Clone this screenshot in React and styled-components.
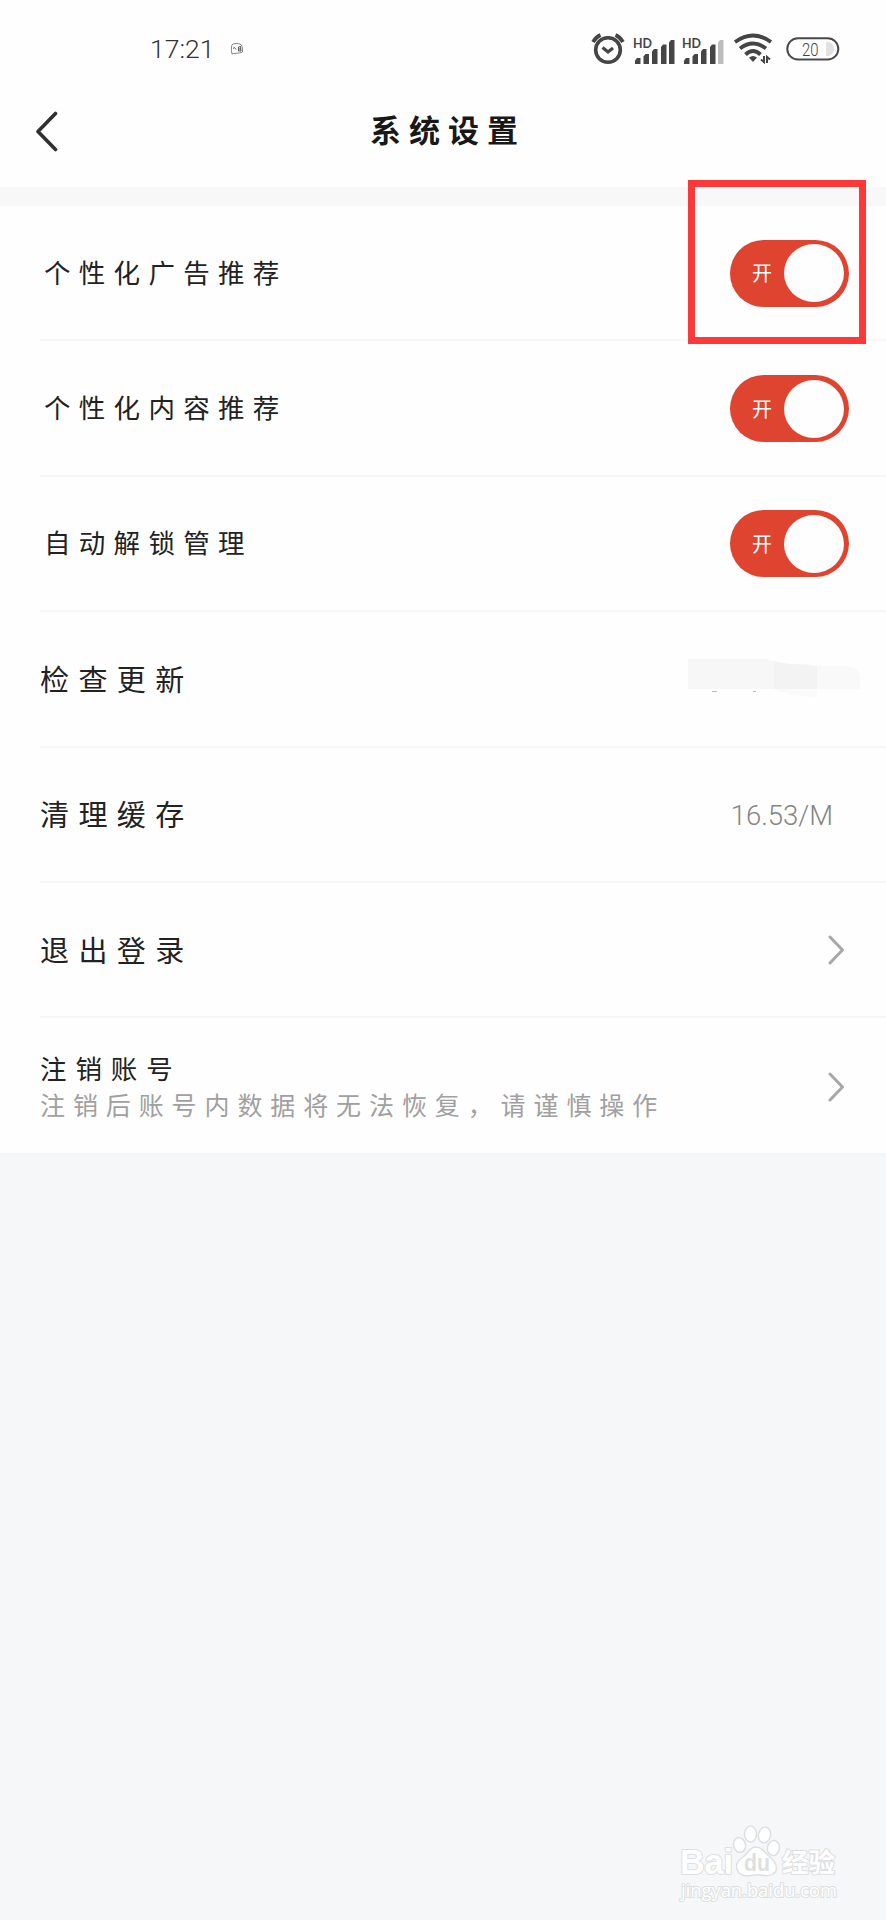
import React from 'react';
import styled, { createGlobalStyle } from 'styled-components';

const GlobalStyle = createGlobalStyle`
  * { box-sizing: border-box; }
  body {
    margin: 0;
    background: #f6f7f9;
    font-family: Roboto, "Noto Sans CJK SC", sans-serif;
    color: #222;
  }
  svg { display: block; }
`;

const Screen = styled.main`
  position: relative;
  width: 886px;
  height: 1920px;
  overflow: hidden;
  background: #f6f7f9;
`;

const StatusBar = styled.div`
  display: flex;
  align-items: center;
  height: 98px;
  padding: 0 46px 0 150px;
  background: #fefefe;
`;

const Clock = styled.span`
  width: 80px;
  font-size: 26.5px;
  font-weight: 300;
  line-height: 30px;
  white-space: nowrap;
  color: #333;
`;

const StatusIcons = styled.div`
  display: flex;
  align-items: center;
  gap: 8px;
  margin-left: auto;
`;

const Header = styled.header`
  display: grid;
  grid-template-columns: 80px 1fr 80px;
  align-items: center;
  height: 89px;
  padding: 0 0 22px;
  background: #fefefe;
`;

const BackButton = styled.button`
  display: block;
  padding: 0 0 0 35px;
  border: 0;
  background: none;
`;

const Title = styled.h1`
  margin: 0;
  padding-left: 10px;
  font-size: 31px;
  line-height: 44px;
  font-weight: 700;
  letter-spacing: 8px;
  text-align: center;
  color: #181818;
`;

const Band = styled.div`
  height: 19px;
  background: #f8f8f8;
`;

const List = styled.section`
  background: #fefefe;
  height: 947px;
`;

const Row = styled.div`
  display: flex;
  align-items: center;
  justify-content: space-between;
  height: 135.4px;
  margin-left: 40px;
  padding-top: 1px;
  padding-right: ${(p) => p.$right || 41}px;
  border-bottom: ${(p) => (p.$last ? '0' : '2px solid #f7f7f7')};
`;

const Label = styled.span`
  display: block;
  padding-top: ${(p) => (p.$compact ? 1 : 3)}px;
  padding-left: ${(p) => (p.$compact ? 4 : 0)}px;
  font-size: ${(p) => (p.$compact ? 26.5 : 29)}px;
  letter-spacing: ${(p) => (p.$compact ? 8.3 : 9.4)}px;
  line-height: 36px;
  font-weight: 400;
  white-space: nowrap;
`;

const Account = styled.div`
  display: flex;
  flex-direction: column;
`;

const AccountName = styled(Label)`
  padding-left: 0;
  font-size: 26.5px;
  letter-spacing: 8.9px;
`;

const Hint = styled.span`
  font-size: 25px;
  letter-spacing: 7.9px;
  line-height: 37px;
  font-weight: 400;
  white-space: nowrap;
  color: #a0a0a0;
`;

const Value = styled.span`
  padding-top: 2px;
  font-size: 27.5px;
  font-weight: 300;
  line-height: 36px;
  color: #858585;
`;

const Switch = styled.button`
  display: flex;
  align-items: center;
  justify-content: space-between;
  width: 119px;
  height: 67px;
  margin-right: -4px;
  padding: 0 5px 0 22px;
  border: 0;
  border-radius: 34px;
  background: #de442f;
  color: #fff;
  font: 400 20px/24px "Noto Sans CJK SC", sans-serif;
`;

const Knob = styled.i`
  width: 60px;
  height: 58px;
  border-radius: 50%;
  background: #fefefe;
`;

const Highlight = styled.div`
  position: absolute;
  left: 688px;
  top: 180px;
  width: 178px;
  height: 164px;
  border: 7px solid #fd3838;
`;

const Watermark = styled.svg`
  position: absolute;
  left: 671px;
  top: 1820px;
`;

function Toggle() {
  return <Switch role="switch" aria-checked="true">开<Knob /></Switch>;
}

function Chevron() {
  return (
    <svg width="17" height="30" viewBox="0 0 17 30" fill="none">
      <path d="M2 2 L14.5 15 L2 28" stroke="#a7a7a7" strokeWidth="3" strokeLinecap="round" strokeLinejoin="round" />
    </svg>
  );
}

function ChatIcon() {
  return (
    <svg width="14" height="14" viewBox="0 0 14 14" fill="none" stroke="#777" strokeWidth="0.9">
      <path d="M3 2 Q6 .8 10 2 Q13 3 12.500 10 L9.500 11 L4 11.500 L2 12 Q1 9 1.500 5 Q1.500 3 3 2 Z" />
      <path d="M3 6.500 L4.500 5.500 L6 7.500 M8.500 5 L10.500 4.500 L11 9 L8.500 9 Z M8.500 7 H11" stroke="#444" />
    </svg>
  );
}

function AlarmIcon() {
  return (
    <svg width="34" height="34" viewBox="0 0 34 34" fill="none" stroke="#454545">
      <circle cx="17" cy="18" r="12.300" strokeWidth="3.600" />
      <path d="M11.500 15.500 L17 20 L22 16" strokeWidth="3.200" />
      <path d="M2 10 Q5 5 9.500 3 M24.500 3 Q29 5 32 10" strokeWidth="3.800" />
    </svg>
  );
}

function SignalIcon({ weak }) {
  const bars = [[2, 27], [10.5, 23], [19, 18], [28, 13.5], [36, 9]];
  return (
    <svg width="41" height="36" viewBox="0 0 41 36" overflow="visible">
      <text x="0" y="16.500" fontFamily="Lato, sans-serif" fontSize="13.500" fontWeight="700" fill="#454545" textLength="19" lengthAdjust="spacingAndGlyphs">HD</text>
      {bars.map(([x, y], i) => (
        <path key={x} d={`M${x} 33 V${y + 2.5} L${x + 2} ${y} H${x + 5.5} V33 Z`} fill={weak && i === 4 ? '#bdbdbd' : '#454545'} />
      ))}
    </svg>
  );
}

function WifiIcon() {
  return (
    <svg width="47" height="32" viewBox="-3 0 47 32" fill="none" stroke="#454545" strokeWidth="3.800">
      <path d="M1 9 Q19 -4 37 9" />
      <path d="M6 15.500 Q19 5.500 32 15.500" />
      <path d="M11.500 21.500 Q19 14.500 26.500 21.500" />
      <path d="M15 24.500 Q19 21.500 23 24.500 L19 29 Z" fill="#454545" stroke="none" />
      <path d="M30 23 V29 L27 26.500 M33 30 V24 L36 26.500" strokeWidth="2" />
    </svg>
  );
}

function BatteryIcon() {
  return (
    <svg width="54" height="24" viewBox="0 0 54 24">
      <rect x="1.300" y="1.300" width="51" height="21.200" rx="10.600" fill="none" stroke="#4a4a4a" strokeWidth="2" />
      <path d="M40 5 H43 Q48 7 48 12 Q48 17 43 19 H40 Z" fill="#e1e1e1" />
      <text x="16" y="18.500" fontFamily="Roboto, sans-serif" fontSize="18" fontWeight="300" fill="#444" textLength="16.500" lengthAdjust="spacingAndGlyphs">20</text>
    </svg>
  );
}

function VersionMask() {
  return (
    <svg width="174" height="48" viewBox="0 0 174 48">
      <path d="M0 4 H78 L86 6 V34 H0 Z" fill="#f7f7f7" />
      <path d="M86 6 L94 8 L102 9 L119 9.500 L129 11 V34 H86 Z" fill="#f3f3f3" />
      <path d="M86 34 H129 V42 L105 40 Z" fill="#fafafa" />
      <path d="M129 11 H157 Q172 12 172 24 V34 H129 Z" fill="#f9f9f9" />
      <path d="M24 36.500 H29 M65 36.500 H68" stroke="#bbb" />
    </svg>
  );
}

function BaiduMark() {
  const outlined = { fill: '#fff', stroke: '#dddfe1', strokeWidth: 2, paintOrder: 'stroke' };
  return (
    <Watermark width="190" height="90" viewBox="0 0 190 90">
      <text x="9" y="54" fontFamily="Liberation Sans, sans-serif" fontWeight="700" fontSize="35" textLength="53" lengthAdjust="spacingAndGlyphs" {...outlined}>Bai</text>
      <g fill="#fff" stroke="#dddfe1" strokeWidth="1.500">
        <ellipse cx="68.500" cy="25" rx="6" ry="7.500" transform="rotate(-12 68.5 25)" />
        <ellipse cx="79.500" cy="14" rx="6" ry="8" />
        <ellipse cx="93.500" cy="15" rx="6" ry="8" transform="rotate(12 93.5 15)" />
        <ellipse cx="102.500" cy="28" rx="6" ry="7.500" transform="rotate(12 102.5 28)" />
        <path d="M85 27 C91 27 94 33 99 37 C107 44 107 51 102 54 C96 58 90 54 85 55 C78 56 72 57 68 53 C63 47 66 41 72 37 C77 33 79 27 85 27 Z" />
      </g>
      <text x="73" y="50.500" fontFamily="Liberation Sans, sans-serif" fontWeight="700" fontSize="23" fill="#dedfe1" textLength="26" lengthAdjust="spacingAndGlyphs">du</text>
      <text x="111" y="52" fontFamily="Noto Sans CJK SC, sans-serif" fontWeight="700" fontSize="26" textLength="53" lengthAdjust="spacingAndGlyphs" {...outlined}>经验</text>
      <text x="10" y="76.500" fontFamily="Open Sans, sans-serif" fontSize="17.500" textLength="156" lengthAdjust="spacingAndGlyphs" {...outlined}>jingyan.baidu.com</text>
    </Watermark>
  );
}

export default function App() {
  return (
    <>
      <GlobalStyle />
      <Screen>
        <StatusBar>
          <Clock>17:21</Clock>
          <ChatIcon />
          <StatusIcons>
            <AlarmIcon />
            <SignalIcon />
            <SignalIcon weak />
            <WifiIcon />
            <BatteryIcon />
          </StatusIcons>
        </StatusBar>
        <Header>
          <BackButton aria-label="返回">
            <svg width="24" height="42" viewBox="0 0 24 42" fill="none">
              <path d="M20.500 2.500 L3 20.500 L20.500 38.500" stroke="#303030" strokeWidth="3.600" strokeLinecap="round" strokeLinejoin="round" />
            </svg>
          </BackButton>
          <Title>系统设置</Title>
        </Header>
        <Band />
        <List>
          <Row><Label $compact>个性化广告推荐</Label><Toggle /></Row>
          <Row><Label $compact>个性化内容推荐</Label><Toggle /></Row>
          <Row><Label $compact>自动解锁管理</Label><Toggle /></Row>
          <Row $right={24}><Label>检查更新</Label><VersionMask /></Row>
          <Row $right={53}><Label>清理缓存</Label><Value>16.53/M</Value></Row>
          <Row><Label>退出登录</Label><Chevron /></Row>
          <Row $last>
            <Account>
              <AccountName>注销账号</AccountName>
              <Hint>注销后账号内数据将无法恢复，请谨慎操作</Hint>
            </Account>
            <Chevron />
          </Row>
        </List>
        <Highlight />
        <BaiduMark />
      </Screen>
    </>
  );
}
